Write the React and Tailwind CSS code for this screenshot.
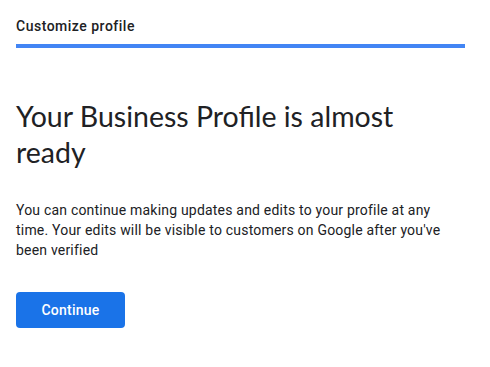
export default function App() {
  return (
    <div className="w-[490px] h-[367px] bg-white pl-4 pr-[25px] pt-4">
      <div className="text-[14px] leading-5 font-medium text-[#202124] font-['Roboto',sans-serif] tracking-[0.5px]">
        Customize profile
      </div>
      <div className="mt-2 h-1 bg-[#4285f4]" />
      <h1 className="mt-[50px] text-[28.5px] leading-9 text-[#202124] font-['Lato',sans-serif] pr-6">
        Your Business Profile is almost ready
      </h1>
      <p className="mt-[30px] w-[440px] text-[14px] leading-5 tracking-[0.2px] text-[#202124] font-['Roboto',sans-serif]">
        You can continue making updates and edits to your profile at any time. Your edits will be visible to customers on Google after you've been verified
      </p>
      <button className="mt-8 w-[109px] h-9 rounded bg-[#1a73e8] text-white text-[14px] tracking-[0.25px] font-medium font-['Roboto',sans-serif]">
        Continue
      </button>
    </div>
  );
}
